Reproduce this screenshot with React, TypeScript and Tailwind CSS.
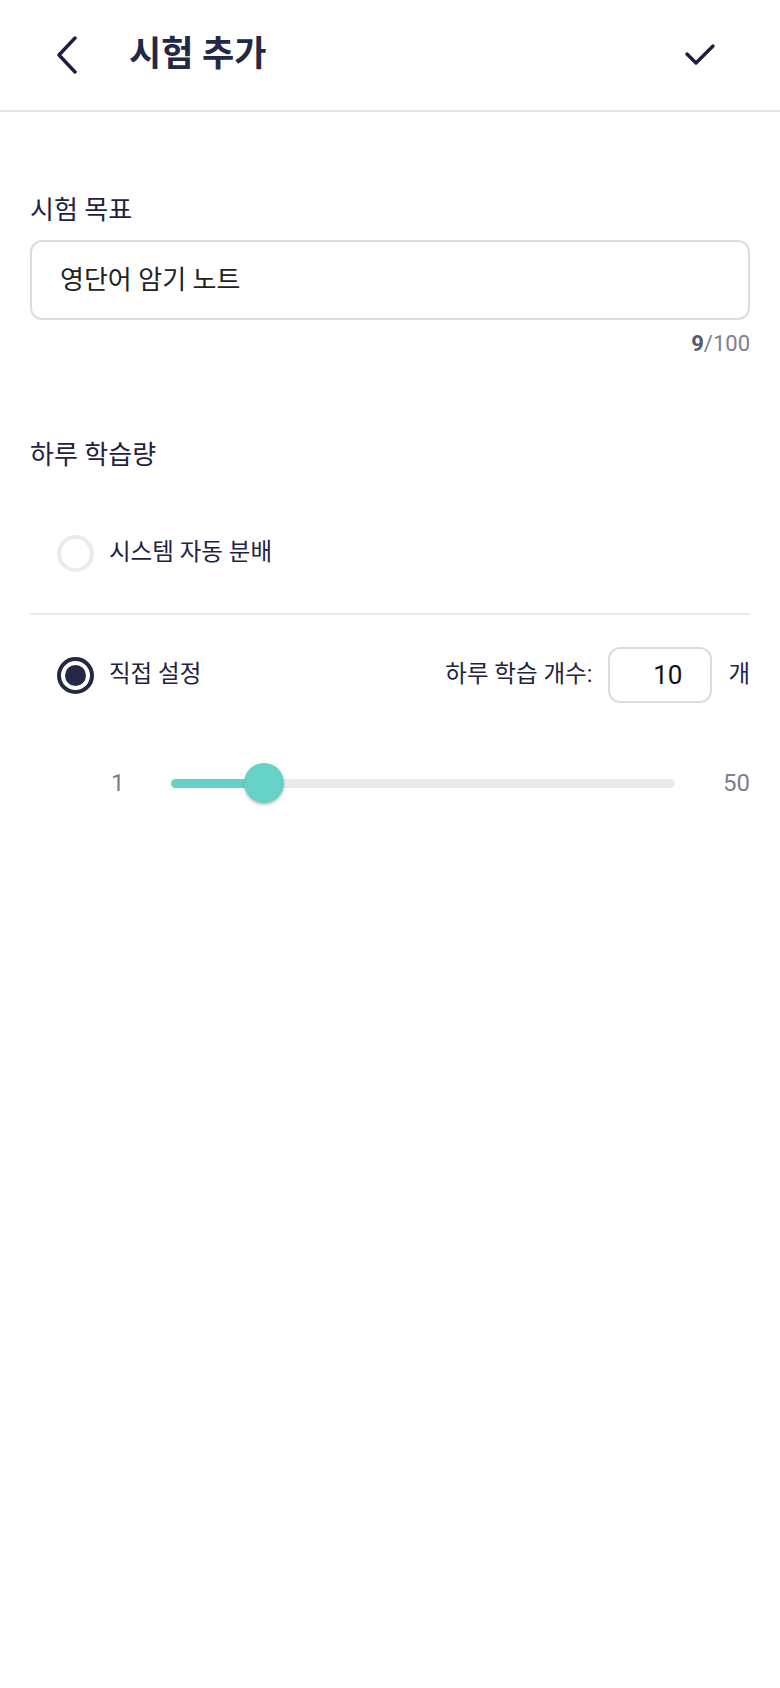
import { useState } from 'react'

const FONT = 'font-[Roboto,"Noto_Sans_CJK_KR",sans-serif]'

function Radio({ checked }: { checked: boolean }) {
  if (!checked) {
    return <span className="block h-[37px] w-[37px] rounded-full border-[4px] border-[#ebebeb]" />
  }
  return (
    <span className="flex h-[37px] w-[37px] items-center justify-center rounded-full border-[4px] border-[#222845]">
      <span className="block h-[21px] w-[21px] rounded-full bg-[#222845]" />
    </span>
  )
}

export default function App() {
  const [title] = useState('영단어 암기 노트')
  const min = 1
  const max = 50
  const value = 10
  const pct = ((value - min) / (max - min)) * 100

  return (
    <div className={`min-h-screen w-full bg-white text-[#1f2341] ${FONT}`}>
      <header className="flex h-[112px] items-center border-b-2 border-[#e6e6e6] pl-[54px] pr-[64px]">
        <button className="flex h-[40px] w-[26px] items-center justify-center">
          <svg width="24" height="38" viewBox="0 0 24 38" fill="none">
            <path d="M20 2 L4 19 L20 36" stroke="#1c1d3f" strokeWidth="3.4" strokeLinecap="round" strokeLinejoin="round" />
          </svg>
        </button>
        <h1 className="ml-[49px] text-[35px] font-bold leading-[40px] text-[#222845]">시험 추가</h1>
        <button className="ml-auto flex h-[30px] w-[32px] items-center justify-center">
          <svg width="32" height="24" viewBox="0 0 32 24" fill="none">
            <path d="M3 11 L12 20 L29 3" stroke="#1c1d3f" strokeWidth="3.4" strokeLinecap="round" strokeLinejoin="round" />
          </svg>
        </button>
      </header>

      <main className="px-[30px]">
        <div className="mt-[82px] text-[26px] leading-[32px]">시험 목표</div>
        <div className="mt-[14px] flex h-[80px] items-center rounded-[12px] border-2 border-[#dcdcdc] pl-[28px] text-[26px] text-[#222]">
          {title}
        </div>
        <div className="mt-[10px] text-right text-[22px] leading-[28px] text-[#7b7f91]">
          <span className="font-bold text-[#55596b]">{title.length}</span>/100
        </div>

        <div className="mt-[81px] text-[26px] leading-[32px]">하루 학습량</div>

        <div className="mt-[62px] flex h-[40px] items-center gap-[15px] pl-[27px]">
          <Radio checked={false} />
          <span className="text-[23.5px]">시스템 자동 분배</span>
        </div>

        <div className="mt-[40px] h-[2px] bg-[#ebebeb]" />

        <div className="mt-[32px] flex h-[56px] items-center pl-[27px]">
          <Radio checked />
          <span className="ml-[15px] text-[23.5px]">직접 설정</span>
          <span className="ml-auto text-[23.5px]">하루 학습 개수:</span>
          <div className="ml-[16px] flex h-[56px] w-[104px] items-center justify-end rounded-[12px] border-2 border-[#dcdcdc] pr-[28px] text-[26px] text-[#111]">
            {value}
          </div>
          <span className="ml-[16px] text-[23.5px]">개</span>
        </div>

        <div className="mt-[60px] flex h-[40px] items-center pl-[81px] text-[24px] text-[#7b7f91]">
          <span className="w-[60px]">{min}</span>
          <div className="relative h-[9px] flex-1 rounded-full bg-[#ebebeb]">
            <div className="h-full rounded-full bg-[#66d2c6]" style={{ width: `${pct}%` }} />
            <div
              className="absolute top-1/2 h-[40px] w-[40px] -translate-x-1/2 -translate-y-1/2 rounded-full bg-[#66d2c6] shadow-[0_2px_3px_rgba(0,0,0,0.22)]"
              style={{ left: `${pct}%` }}
            />
          </div>
          <span className="w-[75px] text-right">{max}</span>
        </div>
      </main>
    </div>
  )
}
